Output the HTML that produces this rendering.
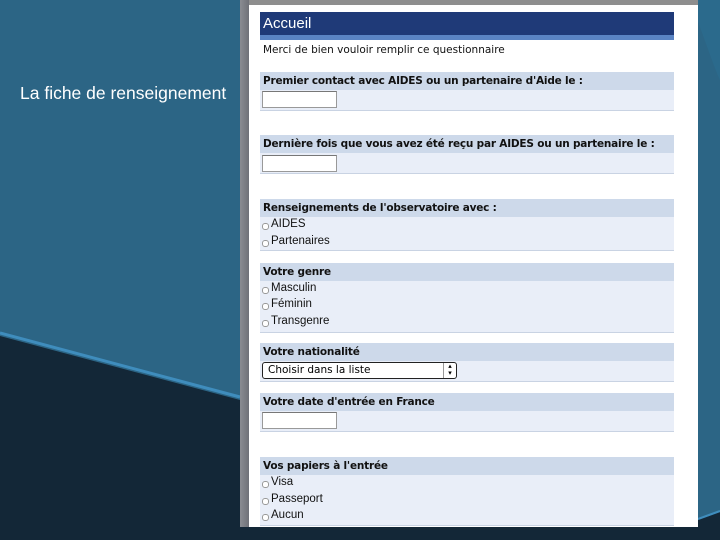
<!DOCTYPE html>
<html><head><style>
body{margin:0;width:720px;height:540px;overflow:hidden;position:relative;background:#2c6585;font-family:"DejaVu Sans","Liberation Sans",sans-serif}
.a{position:absolute}
.h{position:absolute;left:260px;width:414px;height:18px;background:#cdd9ea;font-weight:bold;font-size:10.5px;line-height:18px;padding-left:3px;box-sizing:border-box;color:#111;letter-spacing:-0.2px}
.b{position:absolute;left:260px;width:414px;background:#e9eef8;border-bottom:1px solid #c9d3e3;box-sizing:border-box}
.in{position:absolute;left:262px;width:75px;height:17px;background:#fff;border:1px solid #999;border-top-color:#777;box-sizing:border-box}
.o{position:absolute;left:262px;font-size:11.5px;color:#111;font-family:"Liberation Sans",sans-serif}
.o:before{content:"";display:inline-block;width:5px;height:5px;border:1px solid #999;border-radius:3px;margin-right:2px;vertical-align:-3px;background:#fff}
</style></head><body>
<svg class="a" style="left:0;top:0" width="720" height="540">
<polygon points="0,336 240,400 240,540 0,540" fill="#132737"/>
<line x1="0" y1="333" x2="240" y2="397" stroke="#3f8dbd" stroke-width="3"/>
<path d="M690,0 C705,40 715,70 720,80 L720,0 Z" fill="#2b6a8c"/>
<polygon points="698,520 720,512 720,540 698,540" fill="#132737"/>
<line x1="698" y1="519" x2="720" y2="511" stroke="#3f8dbd" stroke-width="2"/>
<rect x="240" y="527" width="460" height="13" fill="#132737"/>
</svg>
<div class="a" style="left:20px;top:83px;color:#fff;font-size:17.5px;font-family:'Liberation Sans',sans-serif">La fiche de renseignement</div>
<div class="a" style="left:240px;top:0;width:9px;height:527px;background:linear-gradient(90deg,#8a8c92,#6f7178)"></div>
<div class="a" style="left:249px;top:0;width:449px;height:527px;background:#fff"></div>
<div class="a" style="left:249px;top:0;width:449px;height:5px;background:#8e8e8e"></div>
<div class="a" style="left:260px;top:12px;width:414px;height:23px;background:#1f3a78;color:#fff;font-size:15px;line-height:23px;padding-left:3px;box-sizing:border-box;font-family:'Liberation Sans',sans-serif">Accueil</div>
<div class="a" style="left:260px;top:35px;width:414px;height:5px;background:#5a84c4"></div>
<div class="a" style="left:263px;top:44px;font-size:10.5px;color:#111">Merci de bien vouloir remplir ce questionnaire</div>

<div class="h" style="top:72px">Premier contact avec AIDES ou un partenaire d'Aide le :</div>
<div class="b" style="top:90px;height:21px"></div><div class="in" style="top:91px"></div>

<div class="h" style="top:135px">Dernière fois que vous avez été reçu par AIDES ou un partenaire le :</div>
<div class="b" style="top:153px;height:21px"></div><div class="in" style="top:155px"></div>

<div class="h" style="top:199px">Renseignements de l'observatoire avec :</div>
<div class="b" style="top:217px;height:34px"></div>
<div class="o" style="top:218px">AIDES</div><div class="o" style="top:235px">Partenaires</div>

<div class="h" style="top:263px">Votre genre</div>
<div class="b" style="top:281px;height:52px"></div>
<div class="o" style="top:282px">Masculin</div><div class="o" style="top:298px">Féminin</div><div class="o" style="top:315px">Transgenre</div>

<div class="h" style="top:343px">Votre nationalité</div>
<div class="b" style="top:361px;height:21px"></div>
<div class="a" style="left:262px;top:362px;width:195px;height:17px;border:1px solid #222;border-radius:3px;background:#fff;box-sizing:border-box;font-size:10.5px;line-height:15px;padding-left:5px">Choisir dans la liste<span style="position:absolute;right:0;top:0;width:12px;height:15px;border-left:1px solid #999;font-size:7px;text-align:center;line-height:7px">▴<br>▾</span></div>

<div class="h" style="top:393px">Votre date d'entrée en France</div>
<div class="b" style="top:411px;height:21px"></div><div class="in" style="top:412px"></div>

<div class="h" style="top:457px">Vos papiers à l'entrée</div>
<div class="b" style="top:475px;height:51px"></div>
<div class="o" style="top:476px">Visa</div><div class="o" style="top:493px">Passeport</div><div class="o" style="top:509px">Aucun</div>
</body></html>
